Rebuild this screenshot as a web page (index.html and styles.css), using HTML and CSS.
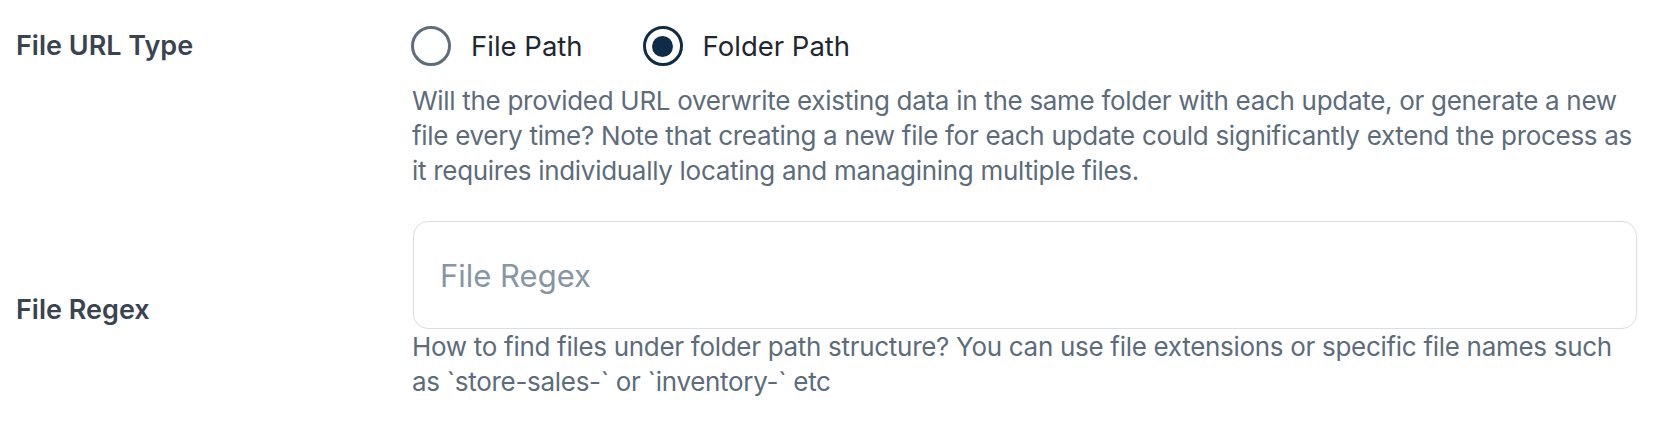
FILE: index.html
```html
<!DOCTYPE html>
<html>
<head>
<meta charset="utf-8">
<link rel="stylesheet" href="styles.css">
</head>
<body>
<div class="form">
  <div class="row row-top">
    <div class="label">File URL Type</div>
    <div class="field">
      <div class="radios">
        <label class="radio">
          <span class="ring"></span>
          <span class="radio-text">File Path</span>
        </label>
        <label class="radio checked">
          <span class="ring"><span class="dot"></span></span>
          <span class="radio-text">Folder Path</span>
        </label>
      </div>
      <p class="hint hint-first">Will the provided URL overwrite existing data in the same folder with each update, or generate a new file every time? Note that creating a new file for each update could significantly extend the process as it requires individually locating and managining multiple files.</p>
    </div>
  </div>
  <div class="row row-center">
    <div class="label">File Regex</div>
    <div class="field">
      <div class="input"><span class="placeholder">File Regex</span></div>
      <p class="hint">How to find files under folder path structure? You can use file extensions or specific file names such as `store-sales-` or `inventory-` etc</p>
    </div>
  </div>
</div>
</body>
</html>
```

FILE: styles.css
```css
* { box-sizing: border-box; }
html, body { margin: 0; padding: 0; background: #ffffff; }
body {
  font-family: "Inter", "Liberation Sans", sans-serif;
  width: 1668px;
  height: 428px;
  overflow: hidden;
}
.form {
  padding-top: 26px;
  padding-right: 31px;
}
.row {
  display: flex;
}
.row-top { align-items: flex-start; }
.row-center { align-items: center; margin-top: 33px; }
.label {
  width: 411px;
  padding-left: 16px;
  font-size: 27px;
  font-weight: 600;
  color: #3a4451;
  line-height: 40px;
}
.field {
  flex: 1;
  min-width: 0;
}
.radios {
  display: flex;
  gap: 60px;
  height: 40px;
  align-items: center;
}
.radio {
  display: flex;
  align-items: center;
  gap: 20px;
}
.ring {
  width: 40px;
  height: 40px;
  border-radius: 50%;
  border: 3px solid #5d6d7b;
  display: flex;
  align-items: center;
  justify-content: center;
}
.checked .ring { border-color: #0e2c47; }
.dot {
  width: 21px;
  height: 21px;
  border-radius: 50%;
  background: #0e2c47;
}
.radio-text {
  font-size: 27.5px;
  color: #1f2731;
}
.hint {
  margin: 0 0 0 1px;
  font-size: 26px;
  line-height: 35px;
  letter-spacing: -0.3px;
  color: #5c6c7c;
}
.hint-first { margin-top: 17px; }
.input {
  height: 108px;
  margin-left: 2px;
  border: 1.5px solid #d9dee4;
  border-radius: 15px;
  display: flex;
  align-items: center;
  padding-left: 26px;
}
.placeholder {
  font-size: 31px;
  color: #8796a5;
}
```
